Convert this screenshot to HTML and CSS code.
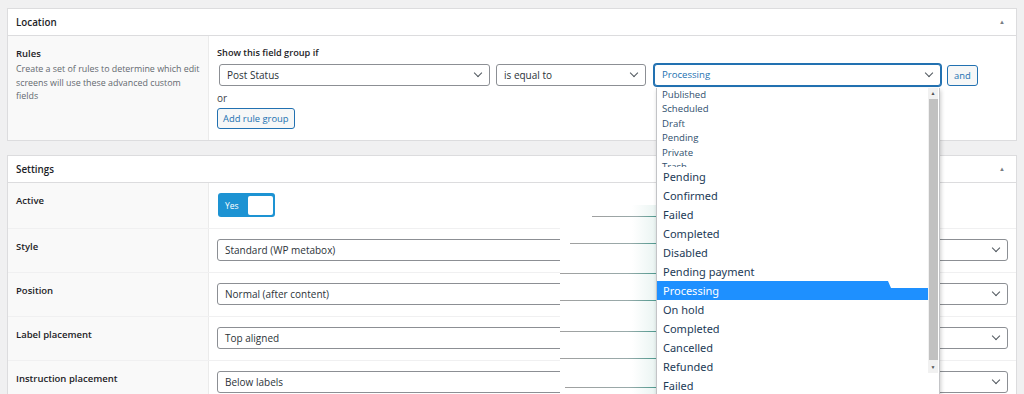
FILE: index.html
```html
<!DOCTYPE html>
<html lang="en">
<head>
  <meta charset="UTF-8">
  <title>Field group</title>
<link rel="stylesheet" href="styles.css">
</head>
<body>
  <!-- Location -->
  <div class="postbox">
    <div class="postbox-header">
      <h2>Location</h2>
      <span class="toggle-arrow">&#9650;</span>
    </div>
    <div class="field row-rules">
      <div class="label">
        <label>Rules</label>
        <p class="desc">Create a set of rules to determine which edit<br>screens will use these advanced custom<br>fields</p>
      </div>
      <div class="input">
        <h4 class="rule-title">Show this field group if</h4>
        <div class="rule-row">
          <div class="select sel-param">Post Status<i class="chev"></i></div>
          <div class="select sel-op">is equal to<i class="chev"></i></div>
          <div class="select sel-value focus">Processing<i class="chev"></i></div>
          <span class="btn btn-and">and</span>
        </div>
        <p class="or">or</p>
        <span class="btn">Add rule group</span>
      </div>
    </div>
  </div>

  <!-- Settings -->
  <div class="postbox settings">
    <div class="postbox-header">
      <h2>Settings</h2>
      <span class="toggle-arrow">&#9650;</span>
    </div>
    <div class="field row-active">
      <div class="label"><label>Active</label></div>
      <div class="input">
        <div class="switch"><span class="switch-on">Yes</span><span class="knob"></span></div>
      </div>
    </div>
    <div class="field">
      <div class="label"><label>Style</label></div>
      <div class="input"><div class="select wide">Standard (WP metabox)<i class="chev"></i></div></div>
    </div>
    <div class="field">
      <div class="label"><label>Position</label></div>
      <div class="input"><div class="select wide">Normal (after content)<i class="chev"></i></div></div>
    </div>
    <div class="field">
      <div class="label"><label>Label placement</label></div>
      <div class="input"><div class="select wide">Top aligned<i class="chev"></i></div></div>
    </div>
    <div class="field">
      <div class="label"><label>Instruction placement</label></div>
      <div class="input"><div class="select wide">Below labels<i class="chev"></i></div></div>
    </div>
  </div>

  <!-- smeared strip left of the dropdown (screen capture artefact) -->
  <div class="smear">
    <span class="ln" style="top:11px;left:32px"></span>
    <span class="ln" style="top:38px;left:10px"></span>
    <span class="ln" style="top:68px;left:0"></span>
    <span class="ln" style="top:95px;left:0"></span>
    <span class="ln" style="top:126px;left:0"></span>
    <span class="ln" style="top:153px;left:0"></span>
    <span class="ln" style="top:182px;left:5px"></span>
  </div>

  <!-- open dropdown of the value select -->
  <div class="dropdown">
    <ul class="opts-small">
      <li>Published</li>
      <li>Scheduled</li>
      <li>Draft</li>
      <li>Pending</li>
      <li>Private</li>
      <li>Trash</li>
    </ul>
    <ul class="opts-big">
      <li>Pending</li>
      <li>Confirmed</li>
      <li>Failed</li>
      <li>Completed</li>
      <li>Disabled</li>
      <li>Pending payment</li>
      <li class="selected">Processing</li>
      <li>On hold</li>
      <li>Completed</li>
      <li>Cancelled</li>
      <li>Refunded</li>
      <li>Failed</li>
    </ul>
    <div class="scrollbar">
      <span class="arr up">&#9650;</span>
      <span class="thumb"></span>
      <span class="arr down">&#9660;</span>
    </div>
  </div>
</body>
</html>
```

FILE: styles.css
```css
*{margin:0;padding:0;box-sizing:border-box;}
body{
  background:#f0f0f1;
  font-family:"Open Sans","Noto Sans",sans-serif;
  font-size:10px;
  color:#1d2327;
  padding:8px 8px 0 7px;
  position:relative;
  height:394px;
  overflow:hidden;
}
ul{list-style:none;}

/* boxes */
.postbox{
  width:1010px;
  background:#fff;
  border:1px solid #dcdcde;
}
.postbox.settings{margin-top:14px;}
.postbox-header{
  height:27px;
  border-bottom:1px solid #dcdcde;
  display:flex;
  align-items:center;
  justify-content:space-between;
  padding:0 8px;
}
.postbox-header h2{
  font-size:9.8px;
  font-weight:600;
  color:#1d2327;
}
.toggle-arrow{
  font-size:6px;
  color:#787c82;
  margin-right:3px;
}

/* fields */
.field{
  display:flex;
  border-top:1px solid #f0f0f1;
}
.postbox-header + .field{border-top:none;}
.field .label{
  width:201px;
  flex:none;
  background:#f9f9f9;
  border-right:1px solid #ebebeb;
  padding:11px 8px;
}
.field .label label{
  font-weight:600;
  font-size:9.5px;
  display:block;
  line-height:14px;
}
.field .desc{
  color:#646970;
  font-size:8.9px;
  line-height:13.5px;
  margin-top:1px;
  white-space:nowrap;
}
.field .input{
  flex:1;
  padding:10px 8px;
  height:43px;
}
.row-rules .input{height:104px;}
.row-active .input{height:45px;}

.rule-title{
  font-size:9.2px;
  font-weight:600;
  line-height:14px;
  margin-bottom:4px;
}
.rule-row{
  display:flex;
  align-items:center;
  padding-left:2px;
}
.select{
  height:22px;
  border:1px solid #8c8f94;
  border-radius:3px;
  background:#fff;
  color:#2c3338;
  font-size:10px;
  line-height:20px;
  padding:0 7px;
  position:relative;
}
.chev{
  position:absolute;
  right:8px;
  top:5px;
  width:6px;
  height:6px;
  border-right:1.3px solid #50575e;
  border-bottom:1.3px solid #50575e;
  transform:rotate(45deg);
}
.sel-param{width:271px;}
.sel-op{width:150px;margin-left:6px;}
.sel-value{width:287px;margin-left:8px;}
.select.focus{
  border-color:#2271b1;
  box-shadow:0 0 0 1px #2271b1;
  color:#2271b1;
  font-size:9.6px;
}
.select.wide{width:791px;}

.btn{
  display:inline-block;
  height:21px;
  line-height:19px;
  padding:0 5px;
  border:1px solid #2271b1;
  border-radius:3px;
  background:#f6f7f7;
  color:#2271b1;
  font-size:9.4px;
}
.btn-and{margin-left:6px;padding:0 6px;}
.or{
  font-size:10px;
  line-height:14px;
  margin:5px 0 3px;
  color:#3c434a;
}

/* switch */
.switch{
  width:57px;
  height:24px;
  background:#1d93d3;
  border-radius:3px;
  display:flex;
  align-items:center;
  padding:0 2px 0 7px;
  justify-content:space-between;
  margin-left:1px;
}
.switch-on{color:#fff;font-size:8.5px;}
.knob{
  width:25px;
  height:19px;
  background:#fff;
  border-radius:2px;
}

/* artefact strip */
.smear{
  position:absolute;
  left:560px;
  top:205px;
  width:96px;
  height:189px;
  background:linear-gradient(to right,#fff 75%,#eaf4f2);
}
.smear .ln{
  position:absolute;
  right:0;
  height:1px;
  background:linear-gradient(to right,#a0a0a0,#9aa 70%,#4f9a8f);
}

/* dropdown list */
.dropdown{
  position:absolute;
  left:656px;
  top:88px;
  width:284px;
  height:320px;
  background:#fff;
  border:1px solid #c3c4c7;
  border-top:none;
  border-radius:0 0 4px 4px;
  box-shadow:1px 2px 4px rgba(0,0,0,.2);
}
.opts-small{
  height:79px;
  overflow:hidden;
  padding-left:5px;
  font-size:9.6px;
  line-height:14.4px;
  color:#30506e;
}
.opts-big{
  width:272px;
  font-size:11px;
  line-height:19px;
  color:#1c3a56;
  font-family:"Noto Sans","Open Sans",sans-serif;
}
.opts-big li{padding-left:6px;}
.opts-big li.selected{
  color:#fff;
  background:#1e90ff;
  clip-path:polygon(0 0,231px 0,234px 7px,100% 7px,100% 100%,0 100%);
}
.scrollbar{
  position:absolute;
  right:1px;
  top:0;
  width:10px;
  height:285px;
  background:#f1f1f1;
  display:flex;
  flex-direction:column;
  align-items:center;
}
.arr{font-size:5px;color:#505050;line-height:11px;}
.thumb{
  flex:1;
  width:9px;
  background:#c1c1c1;
  margin:0 0 2px;
}
```
